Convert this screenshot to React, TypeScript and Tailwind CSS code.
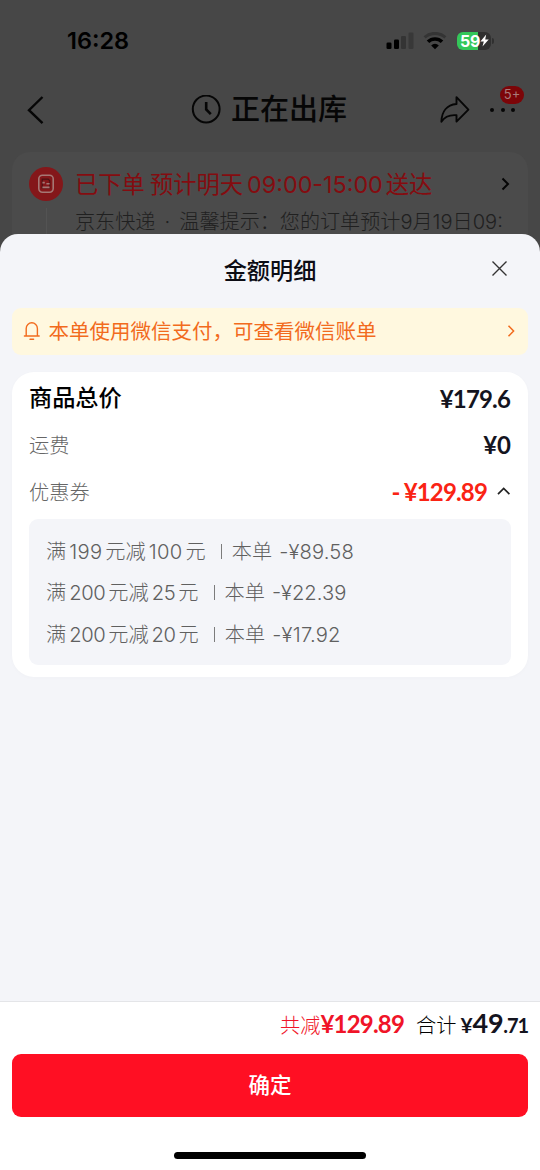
import React from "react";

const coupons = [
  { full: "199", cut: "100", amount: "89.58", tracking: "tracking-[0.3px]", total: "tracking-[0.15px]" },
  { full: "200", cut: "25", amount: "22.39", tracking: "tracking-[-0.4px]", total: "tracking-normal" },
  { full: "200", cut: "20", amount: "17.92", tracking: "tracking-[-0.45px]", total: "tracking-[0.25px]" },
];

const StatusBar = () => (
  <div className="flex h-[81px] items-center justify-between pr-[46px] pl-[67px] text-black">
    <div className="text-[23.5px] leading-none font-semibold">16:28</div>
    <div className="flex items-center">
      <svg width="28" height="18" viewBox="0 0 28 18">
        <rect x="0.5" y="10.5" width="5" height="6.5" rx="1.3" />
        <rect x="8" y="7.5" width="5" height="9.5" rx="1.3" />
        <rect x="15" y="4" width="5" height="13" rx="1.3" fill="#343434" />
        <rect x="22.5" y="0.5" width="5" height="16.5" rx="1.3" fill="#383838" />
      </svg>
      <svg className="ml-[9px]" width="24" height="18" viewBox="0 0 24 18" fill="none">
        <path d="M1.6 5.4 A15.5 15.5 0 0 1 22.4 5.4" stroke="#343434" strokeWidth="3" />
        <path d="M5 9.8 A10 10 0 0 1 19 9.8" stroke="#000" strokeWidth="3.6" />
        <path d="M8.2 13.5 A5.2 5.2 0 0 1 15.8 13.5 L12 17.2Z" fill="#000" />
      </svg>
      <div className="ml-[10px] flex h-[18px] w-[34px] items-center overflow-hidden rounded-[6px] bg-linear-to-r from-[#34c759] from-[61%] to-[#303030] to-[61%] pl-[3px] text-white">
        <span className="text-[16px] leading-[18px] font-bold tracking-[-0.3px]">59</span>
        <svg width="9" height="13" viewBox="0 0 9 13" fill="#fff">
          <path d="M6.2 0.5 0.4 7.4h3.4L2.5 12.5 8.7 5.4H5.2z" />
        </svg>
      </div>
      <div className="ml-px h-[6px] w-[2px] rounded-r-full bg-[#303030]" />
    </div>
  </div>
);

const NavBar = () => (
  <div className="flex h-[57px] items-center text-[#060606]">
    <svg className="ml-[26px]" width="20" height="30" viewBox="0 0 20 30" fill="none" stroke="currentColor" strokeWidth="2.4">
      <path d="M16.5 2 3 15.2 16.5 28.2" />
    </svg>
    <svg className="ml-[145px]" width="30" height="30" viewBox="0 0 30 30" fill="none" stroke="currentColor" strokeWidth="2">
      <circle cx="15.2" cy="14" r="13.4" />
      <path d="M15.2 7V14.5l4.6 4.6" strokeWidth="2.6" />
    </svg>
    <h1 className="ml-[10px] text-[29px] leading-none font-medium">正在出库</h1>
    <svg className="ml-[92px]" width="32" height="30" viewBox="0 0 32 30" fill="none" stroke="currentColor" strokeWidth="1.9" strokeLinejoin="round">
      <path d="M17.5 2.2 29.4 14.6 17.5 26.6V20.2C10.4 19.6 5.8 21.4 2.4 26.8 2.6 16.4 8 9.8 17.5 9z" />
    </svg>
    <div className="relative ml-[18px] flex w-[27px] justify-between px-px">
      <span className="size-[4px] rounded-full bg-current" />
      <span className="size-[4px] rounded-full bg-current" />
      <span className="size-[4px] rounded-full bg-current" />
      <span className="absolute -top-[22px] left-[11px] flex h-[18px] w-[24px] items-center justify-center rounded-full bg-[#7c0508] text-[13px] text-[#a87a7a]">
        5+
      </span>
    </div>
  </div>
);

const OrderCard = () => (
  <div className="mx-3 mt-[14px] flex h-[110px] rounded-[18px] bg-[#4b4b4b] pl-[17px]">
    <div className="flex w-[34px] flex-col items-center">
      <div className="mt-[15px] flex size-[34px] items-center justify-center rounded-full bg-[#84171a]">
        <svg width="18" height="20" viewBox="0 0 18 20" fill="none" stroke="#a57774" strokeWidth="1.6">
          <rect x="1.8" y="1.2" width="14.4" height="17" rx="3.6" />
          <path d="M5.2 5.2h6l1.6 1.6v7H5.2z" stroke="#4a1213" strokeWidth="1.2" />
          <path d="M5.4 8.6h2.4M5.4 13.4h7.2M9.4 9.8h3.2" />
        </svg>
      </div>
      <div className="mt-[7px] w-px flex-1 bg-[#535353]" />
    </div>
    <div className="ml-[12px] flex-1">
      <div className="mt-[18px] flex items-center text-[23.3px] leading-[30px] whitespace-nowrap text-[#840c10]">
        <span>已下单</span>
        <span className="ml-[5px]">预计明天</span>
        <span className="ml-[4px]">09:00-15:00</span>
        <span className="ml-[3px]">送达</span>
        <svg className="-mt-[2px] mr-[18px] ml-auto" width="9" height="14" viewBox="0 0 9 14" fill="none" stroke="#050505" strokeWidth="2">
          <path d="M1.5 1.5 7 7 1.5 12.5" />
        </svg>
      </div>
      <div className="mt-[9px] text-[20.1px] leading-[26px] font-light whitespace-nowrap text-[#202020]">
        京东快递<span className="mx-[3.5px]"> · </span>温馨提示：您的订单预计9月19日09:
      </div>
    </div>
  </div>
);

const Notice = () => (
  <div className="mx-3 flex h-[47px] items-center rounded-[9px] bg-[#fff8df] px-[11px] text-[#f26b1d]">
    <svg className="-mt-px" width="18" height="20" viewBox="0 0 18 20" fill="none" stroke="currentColor" strokeWidth="1.4" strokeLinecap="round" strokeLinejoin="round">
      <path d="M3.2 14.6V7.4a5.6 5.6 0 0 1 11.2 0v7.2M1.4 15h14.8M7 18.2h3.6" />
    </svg>
    <span className="mt-[2px] ml-[7.5px] text-[20.5px] leading-none">本单使用微信支付，可查看微信账单</span>
    <svg className="-mt-px mr-[2px] ml-auto" width="8" height="14" viewBox="0 0 8 14" fill="none" stroke="currentColor" strokeWidth="1.5">
      <path d="M1.5 1.8 6.6 7 1.5 12.2" />
    </svg>
  </div>
);

const PriceCard = () => (
  <div className="mx-3 mt-[17px] h-[305px] rounded-[22px] bg-white px-[17px] pt-[3px] shadow-[0_1px_4px_rgba(0,0,0,0.02)]">
    <div className="flex h-[47px] items-center justify-between">
      <span className="text-[23.2px] font-medium text-black">商品总价</span>
      <span className="mr-px font-[Lato] text-[24px] font-bold tracking-[-0.85px] text-[#14141e]">¥179.6</span>
    </div>
    <div className="flex h-[47px] items-center justify-between">
      <span className="mt-[2px] text-[20.2px] font-light text-[#666]">运费</span>
      <span className="-mt-px font-[Lato] text-[24px] font-bold text-[#14141e]">¥0</span>
    </div>
    <div className="flex h-[47px] items-center">
      <span className="mt-[2px] text-[20.2px] font-light text-[#666]">优惠券</span>
      <span className="-mt-px ml-auto font-[Lato] text-[24px] font-bold tracking-[-0.85px] text-[#fa2314]">
        <span className="mr-[4px]">-</span>¥129.89
      </span>
      <svg className="-mt-[4px] ml-[9px]" width="15" height="10" viewBox="0 0 15 10" fill="none" stroke="#222" strokeWidth="1.7">
        <path d="M2 8.2 7.7 2.5 13.4 8.2" />
      </svg>
    </div>
    <div className="mt-[3px] h-[146px] rounded-[9px] bg-[#f4f5f9] pt-[12px] pl-[17px] text-[20.2px] leading-[41.4px] font-light text-[#606060]">
      {coupons.map((item) => (
        <div key={item.amount} className="flex">
          <span>满</span>
          <span className={`mx-[3px] ${item.tracking}`}>{item.full}</span>
          <span>元减</span>
          <span className={`mx-[3px] ${item.tracking}`}>{item.cut}</span>
          <span>元</span>
          <span className="mt-[13px] mr-[10px] ml-[15px] h-[15px] w-px bg-[#7c7c7c]" />
          <span>本单</span>
          <span className={`ml-[7px] ${item.total}`}>-¥{item.amount}</span>
        </div>
      ))}
    </div>
  </div>
);

const Footer = () => (
  <div className="mt-auto h-[169px] border-t border-[#e4e5e8] bg-white px-3">
    <div className="flex h-[47px] items-baseline justify-end leading-[42px] whitespace-nowrap">
      <span className="text-[20.2px] font-light text-[#f01428]">共减</span>
      <span className="font-[Lato] text-[24px] font-bold tracking-[-0.8px] text-[#f01428]">¥129.89</span>
      <span className="ml-[12px] text-[20.2px] font-light text-black">合计</span>
      <span className="ml-[4px] font-[Lato] text-[21px] font-bold text-[#14141e]">¥</span>
      <span className="font-[Lato] text-[27px] font-bold tracking-[-0.3px] text-[#14141e]">49</span>
      <span className="font-[Lato] text-[20px] font-bold tracking-[-1.1px] text-[#14141e]">.71</span>
    </div>
    <button className="mt-[5px] block h-[63px] w-full rounded-[9px] bg-[#ff0f23] text-[21.5px] font-medium text-white">
      确定
    </button>
    <div className="mx-auto mt-[35px] h-[7px] w-[192px] rounded-full bg-black" />
  </div>
);

const App = () => {
  return (
    <div className="relative h-[1170px] w-[540px] overflow-hidden bg-[#474747] font-[Inter,'Noto_Sans_CJK_SC',sans-serif]">
      <StatusBar />
      <NavBar />
      <OrderCard />
      <div className="absolute inset-x-0 top-[234px] bottom-0 flex flex-col rounded-t-[18px] bg-[#f4f5f9]">
        <div className="relative flex h-[74px] items-center justify-center">
          <h2 className="text-[23.2px] font-medium text-[#0c0c14]">金额明细</h2>
          <svg className="absolute top-[26px] right-[32px]" width="17" height="17" viewBox="0 0 17 17" fill="none" stroke="#333" strokeWidth="1.4">
            <path d="M1.5 1.5l14 14M15.5 1.5l-14 14" />
          </svg>
        </div>
        <Notice />
        <PriceCard />
        <Footer />
      </div>
    </div>
  );
};

export default App;
